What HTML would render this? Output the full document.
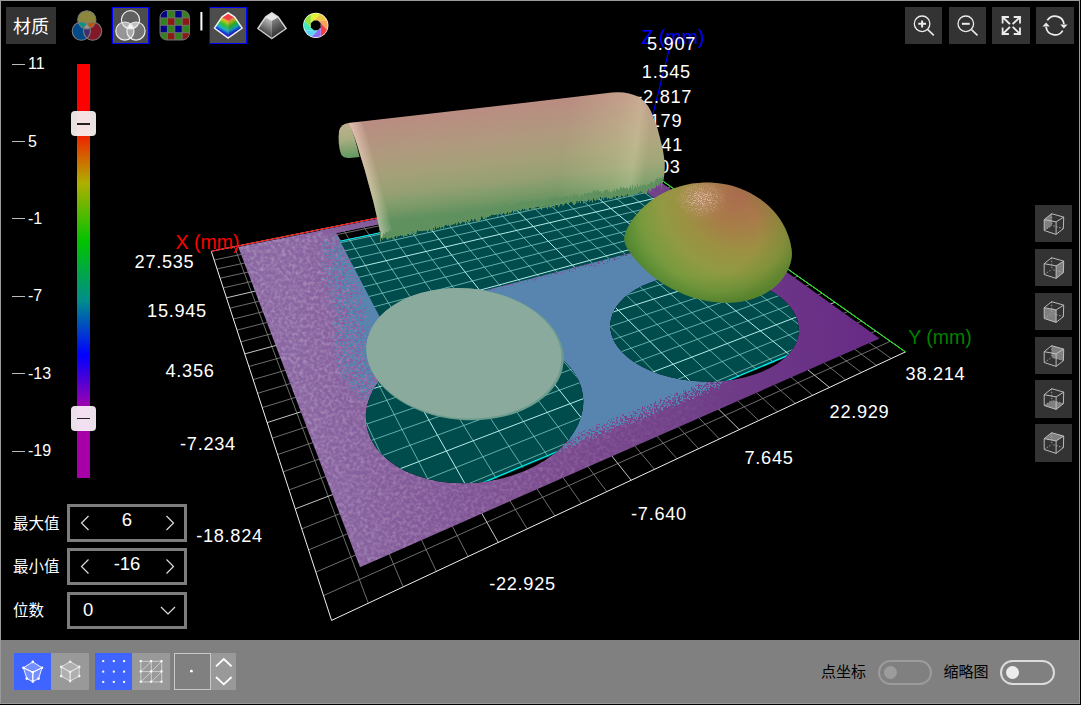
<!DOCTYPE html>
<html><head><meta charset="utf-8"><title>3D</title>
<style>
html,body{margin:0;padding:0;background:#000;}
body{width:1081px;height:705px;overflow:hidden;position:relative;font-family:"Liberation Sans","Noto Sans CJK SC",sans-serif;color:#fff;}
#frame{position:absolute;left:0;top:0;width:1078px;height:702px;border:1px solid #9a9a9a;box-sizing:content-box;}
#scene{position:absolute;left:0;top:0;width:1081px;height:705px;}
.btn{position:absolute;width:37px;height:37px;background:#333;}
.sel{position:absolute;width:35px;height:35px;background:#4d4d4d;border:1px solid #0000ff;}
#mat{position:absolute;left:6px;top:7px;width:50px;height:37px;background:#333;font-size:18px;line-height:40.6px;text-align:center;}
#bar{position:absolute;left:1px;top:640px;width:1078px;height:63px;background:#808080;}
.tick{position:absolute;left:12px;width:13px;height:1px;background:#bbb;}
.tl{position:absolute;left:28px;font-size:16px;line-height:18px;}
.lab{position:absolute;font-size:15.5px;line-height:20px;left:13px;}
.box{position:absolute;left:67px;width:114px;height:31px;border:3px solid #7d7d7d;background:#000;}
.ax{position:absolute;font-size:18.2px;letter-spacing:0.7px;line-height:20px;white-space:nowrap;transform:translate(-50%,-50%);}
.blab{position:absolute;font-size:15px;line-height:20px;color:#000;}
</style></head><body>
<svg id="scene" width="1081" height="705" viewBox="0 0 1081 705">
<defs>
<clipPath id="tealclip"><path d="M339.9,240.8 L379.9,317.2 L703.2,234.4 L629.4,179.6Z"/><path d="M524.6,471.0 L535.3,465.9 L545.1,460.2 L554.0,453.9 L561.7,447.0 L568.3,439.9 L573.7,432.4 L578.0,424.8 L580.9,417.1 L582.7,409.4 L583.4,401.8 L582.8,394.4 L581.2,387.2 L578.6,380.3 L575.0,373.8 L570.4,367.7 L565.0,362.0 L558.9,356.8 L552.0,352.2 L544.5,348.0 L536.4,344.4 L527.8,341.5 L518.8,339.1 L509.4,337.3 L499.7,336.1 L489.8,335.5 L479.8,335.6 L469.7,336.4 L459.6,337.7 L449.5,339.7 L439.7,342.3 L430.1,345.6 L420.8,349.4 L411.9,353.9 L403.5,358.9 L395.7,364.5 L388.7,370.5 L382.4,377.1 L377.0,384.0 L372.5,391.3 L369.1,398.9 L366.9,406.8 L365.9,414.7 L366.1,422.7 L367.7,430.6 L370.6,438.4 L374.8,445.9 L380.4,452.9 L387.3,459.5 L395.4,465.4 L404.6,470.7 L414.9,475.1 L426.0,478.6 L437.8,481.2 L450.2,482.7 L462.9,483.3 L475.7,482.7 L488.5,481.2 L501.0,478.7 L513.1,475.3Z"/><path d="M762.6,371.5 L770.6,367.7 L777.7,363.4 L783.8,358.7 L788.9,353.7 L793.0,348.5 L796.0,343.1 L798.0,337.5 L798.9,331.9 L798.7,326.4 L797.6,320.9 L795.5,315.5 L792.6,310.3 L788.8,305.3 L784.2,300.6 L778.9,296.2 L772.9,292.1 L766.3,288.4 L759.2,285.1 L751.7,282.2 L743.7,279.7 L735.4,277.6 L726.9,276.0 L718.2,274.8 L709.4,274.1 L700.5,273.9 L691.6,274.2 L682.8,274.9 L674.2,276.2 L665.8,277.9 L657.7,280.0 L650.0,282.7 L642.7,285.7 L636.0,289.3 L629.9,293.2 L624.5,297.5 L619.9,302.2 L616.0,307.1 L613.1,312.4 L611.2,317.9 L610.2,323.5 L610.3,329.3 L611.6,335.1 L613.9,340.9 L617.4,346.6 L622.0,352.1 L627.6,357.3 L634.3,362.2 L642.0,366.7 L650.5,370.7 L659.8,374.2 L669.7,377.1 L680.1,379.2 L690.9,380.8 L701.8,381.5 L712.8,381.6 L723.6,380.9 L734.1,379.5 L744.2,377.5 L753.7,374.8Z"/></clipPath>
<clipPath id="planeclip"><path d="M216.2,266.4 L310.7,556.2 L865.7,324.0 L653.1,174.2Z"/></clipPath>
<clipPath id="purpclip"><path d="M238.2,246.9 L639.9,167.2 L879.6,338.6 L360.0,567.2Z M336.4,233.0 L340.9,240.6 L629.4,179.6 L622.1,174.2Z" clip-rule="evenodd"/></clipPath>
<linearGradient id="cyl" gradientUnits="userSpaceOnUse" x1="500" y1="105.6" x2="512" y2="212"><stop offset="0" stop-color="#ba8c82"/><stop offset="0.33" stop-color="#af9a7e"/><stop offset="0.52" stop-color="#a5a078"/><stop offset="0.7" stop-color="#96a073"/><stop offset="0.83" stop-color="#7d9b69"/><stop offset="0.96" stop-color="#5f915f"/></linearGradient>
<radialGradient id="dome" gradientUnits="userSpaceOnUse" cx="738" cy="194" r="126"><stop offset="0" stop-color="#ac6c50"/><stop offset="0.25" stop-color="#a87c48"/><stop offset="0.45" stop-color="#9c9042"/><stop offset="0.62" stop-color="#929a42"/><stop offset="0.8" stop-color="#789a3e"/><stop offset="0.92" stop-color="#5e9036"/><stop offset="1" stop-color="#4c8430"/></radialGradient>
<radialGradient id="spec" gradientUnits="userSpaceOnUse" cx="701" cy="198" r="26"><stop offset="0" stop-color="#d8a898" stop-opacity="0.95"/><stop offset="0.35" stop-color="#d0a088" stop-opacity="0.55"/><stop offset="1" stop-color="#c09070" stop-opacity="0"/></radialGradient>
<linearGradient id="purp" gradientUnits="userSpaceOnUse" x1="300" y1="400" x2="860" y2="340"><stop offset="0" stop-color="#8a66a2"/><stop offset="0.45" stop-color="#7a4a8e"/><stop offset="0.7" stop-color="#703f88"/><stop offset="1" stop-color="#682c86"/></linearGradient>
<filter id="dither" x="0" y="0" width="1081" height="705" filterUnits="userSpaceOnUse"><feGaussianBlur in="SourceAlpha" stdDeviation="6" result="m"/><feTurbulence type="fractalNoise" baseFrequency="0.55" numOctaves="2" seed="3" result="n"/><feColorMatrix in="n" type="matrix" values="0 0 0 0 0  0 0 0 0 0  0 0 0 0 0  3 0 0 0 -1" result="na"/><feComposite in="m" in2="m" operator="arithmetic" k1="-4" k2="4" k3="0" k4="0" result="q"/><feComposite in="q" in2="na" operator="arithmetic" k1="0.5333" k2="0" k3="0" k4="0" result="u"/><feComposite in="m" in2="u" operator="arithmetic" k1="0" k2="0.3333" k3="1" k4="0" result="v"/><feComposite in="v" in2="q" operator="arithmetic" k1="0" k2="1" k3="-0.2667" k4="0" result="s"/><feComponentTransfer in="s" result="t"><feFuncA type="linear" slope="18" intercept="-2.5"/></feComponentTransfer><feFlood flood-color="#5884b0"/><feComposite in2="t" operator="in"/></filter>
<filter id="ditherL" x="0" y="0" width="1081" height="705" filterUnits="userSpaceOnUse"><feGaussianBlur in="SourceAlpha" stdDeviation="17" result="m"/><feTurbulence type="fractalNoise" baseFrequency="0.55" numOctaves="2" seed="11" result="n"/><feColorMatrix in="n" type="matrix" values="0 0 0 0 0  0 0 0 0 0  0 0 0 0 0  3 0 0 0 -1" result="na"/><feComposite in="m" in2="m" operator="arithmetic" k1="-4" k2="4" k3="0" k4="0" result="q"/><feComposite in="q" in2="na" operator="arithmetic" k1="0.5333" k2="0" k3="0" k4="0" result="u"/><feComposite in="m" in2="u" operator="arithmetic" k1="0" k2="0.3333" k3="1" k4="0" result="v"/><feComposite in="v" in2="q" operator="arithmetic" k1="0" k2="1" k3="-0.2667" k4="0" result="s"/><feComponentTransfer in="s" result="t"><feFuncA type="linear" slope="18" intercept="-2.5"/></feComponentTransfer><feFlood flood-color="#5884b0"/><feComposite in2="t" operator="in"/></filter>
<filter id="speck" x="0" y="0" width="1081" height="705" filterUnits="userSpaceOnUse"><feTurbulence type="fractalNoise" baseFrequency="0.28" numOctaves="2" seed="7" result="n"/><feColorMatrix in="n" type="matrix" values="0 0 0 0 1  0 0 0 0 1  0 0 0 0 1  2.2 0 0 0 -0.85" result="na"/><feComposite in="na" in2="SourceAlpha" operator="in"/></filter>
<linearGradient id="speckfade" gradientUnits="userSpaceOnUse" x1="300" y1="400" x2="760" y2="350"><stop offset="0" stop-color="#fff" stop-opacity="1"/><stop offset="0.6" stop-color="#fff" stop-opacity="0.5"/><stop offset="1" stop-color="#fff" stop-opacity="0"/></linearGradient>
<mask id="speckmask"><path d="M238.2,246.9 L639.9,167.2 L879.6,338.6 L360.0,567.2Z M336.4,233.0 L340.9,240.6 L629.4,179.6 L622.1,174.2Z" fill="url(#speckfade)" fill-rule="evenodd"/></mask>
<filter id="rag" x="360" y="160" width="320" height="100" filterUnits="userSpaceOnUse"><feTurbulence type="fractalNoise" baseFrequency="0.6 0.08" numOctaves="2" seed="5" result="n"/><feDisplacementMap in="SourceGraphic" in2="n" scale="9" xChannelSelector="G" yChannelSelector="R"/></filter>
<linearGradient id="capg" gradientUnits="userSpaceOnUse" x1="345" y1="123" x2="349" y2="159"><stop offset="0" stop-color="#c0b08c"/><stop offset="0.45" stop-color="#a8ae80"/><stop offset="1" stop-color="#5f965f"/></linearGradient>
<linearGradient id="cylend" gradientUnits="userSpaceOnUse" x1="585" y1="0" x2="668" y2="12"><stop offset="0" stop-color="#f0e8b0" stop-opacity="0"/><stop offset="0.6" stop-color="#f0e8b0" stop-opacity="0.18"/><stop offset="0.85" stop-color="#f4ecc0" stop-opacity="0.3"/><stop offset="1" stop-color="#f0e8b0" stop-opacity="0.1"/></linearGradient>
<linearGradient id="cyledge" gradientUnits="userSpaceOnUse" x1="366" y1="180" x2="379" y2="176.5"><stop offset="0" stop-color="#ffe8d8" stop-opacity="0.5"/><stop offset="1" stop-color="#ffe8d8" stop-opacity="0"/></linearGradient>
<radialGradient id="spec2" gradientUnits="userSpaceOnUse" cx="701" cy="199" r="27"><stop offset="0" stop-color="#e8c8c0" stop-opacity="1"/><stop offset="0.3" stop-color="#e0c0b0" stop-opacity="0.8"/><stop offset="1" stop-color="#d8b8a0" stop-opacity="0"/></radialGradient>
<filter id="specn" x="660" y="160" width="90" height="80" filterUnits="userSpaceOnUse"><feTurbulence type="fractalNoise" baseFrequency="0.8" numOctaves="1" seed="2" result="n"/><feColorMatrix in="n" type="matrix" values="0 0 0 0 0  0 0 0 0 0  0 0 0 0 0  5 0 0 0 -2.4" result="na"/><feComposite in="SourceGraphic" in2="na" operator="in"/></filter>
<clipPath id="domeclip"><path d="M625.0,243.7 L624.1,238.4 L625.2,233.2 L627.4,228.1 L630.1,223.3 L633.2,218.6 L636.7,214.2 L640.5,209.9 L644.6,205.9 L649.0,202.2 L653.7,198.7 L658.6,195.6 L663.8,192.7 L669.2,190.2 L674.7,188.0 L680.4,186.2 L686.3,184.7 L692.2,183.6 L698.2,182.9 L704.2,182.5 L710.2,182.5 L716.3,182.9 L722.2,183.7 L728.1,184.8 L733.9,186.3 L739.5,188.2 L745.0,190.4 L750.3,193.0 L755.3,195.9 L760.1,199.1 L764.7,202.5 L769.0,206.3 L772.9,210.3 L776.6,214.6 L779.9,219.1 L782.8,223.8 L785.3,228.6 L787.5,233.7 L789.3,238.8 L790.6,244.0 L791.6,249.4 L791.9,254.7 L791.3,260.0 L790.0,264.8 L788.1,269.3 L785.9,273.6 L783.2,277.6 L780.2,281.4 L776.8,284.9 L773.0,288.2 L768.9,291.1 L764.5,293.8 L759.8,296.1 L754.9,298.1 L749.6,299.7 L744.2,301.0 L738.6,302.0 L732.7,302.6 L726.8,302.8 L720.7,302.6 L714.6,302.1 L708.4,301.2 L702.2,300.0 L696.0,298.4 L689.8,296.5 L683.7,294.2 L677.7,291.6 L671.9,288.7 L666.1,285.5 L660.6,282.0 L655.3,278.3 L650.2,274.3 L645.4,270.0 L640.9,265.6 L636.6,261.0 L632.7,256.2 L629.2,251.3 L626.1,246.3Z"/></clipPath>
<radialGradient id="domerim" gradientUnits="userSpaceOnUse" cx="700" cy="232" r="100" gradientTransform="translate(700,232) scale(1,0.74) translate(-700,-232)"><stop offset="0" stop-color="#3c6e1e" stop-opacity="0"/><stop offset="0.6" stop-color="#3c6e1e" stop-opacity="0"/><stop offset="0.85" stop-color="#3c6e1e" stop-opacity="0.22"/><stop offset="1" stop-color="#3c6e1e" stop-opacity="0.5"/></radialGradient>
</defs>
<rect width="1081" height="705" fill="#000"/>
<path d="M214.1,260.0 L647.7,170.4 M234.4,246.7 L368.3,603.2 M217.1,268.9 L655.3,175.7 M256.9,242.1 L403.2,586.9 M220.1,278.2 L663.1,181.2 M278.8,237.7 L436.4,571.4 M223.2,287.9 L671.1,186.9 M300.0,233.5 L468.1,556.5 M229.8,308.2 L687.8,198.6 M340.7,225.3 L527.2,528.8 M233.4,319.0 L696.4,204.7 M360.3,221.4 L554.9,515.9 M237.0,330.1 L705.3,211.0 M379.3,217.5 L581.4,503.5 M240.8,341.8 L714.5,217.4 M397.9,213.8 L606.8,491.6 M248.8,366.5 L733.6,230.9 M433.6,206.7 L654.5,469.3 M253.1,379.6 L743.5,237.9 M450.7,203.2 L677.0,458.8 M257.6,393.3 L753.8,245.1 M467.5,199.8 L698.6,448.7 M262.3,407.6 L764.3,252.5 M483.8,196.6 L719.4,438.9 M272.2,438.2 L786.4,268.1 M515.3,190.2 L758.7,420.5 M277.6,454.6 L798.0,276.2 M530.5,187.2 L777.4,411.8 M283.2,471.8 L809.9,284.6 M545.3,184.2 L795.3,403.4 M289.1,489.9 L822.2,293.3 M559.8,181.3 L812.7,395.3 M301.8,528.8 L848.1,311.5 M587.8,175.7 L845.6,379.9 M308.6,549.9 L861.7,321.1 M601.4,172.9 L861.3,372.5 M315.9,572.1 L875.8,331.0 M614.6,170.3 L876.5,365.4 M323.5,595.6 L890.3,341.3 M627.6,167.7 L891.2,358.6" stroke="#888888" stroke-width="0.8" fill="none"/>
<path d="M226.5,297.8 L679.3,192.6 M320.6,229.3 L498.3,542.4 M244.7,353.9 L723.9,224.0 M415.9,210.2 L631.1,480.2 M267.1,422.6 L775.2,260.2 M499.7,193.4 L739.4,429.6 M295.2,508.9 L835.0,302.3 M574.0,178.4 L829.4,387.4" stroke="#c4c4c4" stroke-width="1" fill="none"/>
<path d="M238.2,246.9 L639.9,167.2 L879.6,338.6 L360.0,567.2Z M336.4,233.0 L340.9,240.6 L629.4,179.6 L622.1,174.2Z" fill="url(#purp)" fill-rule="evenodd"/>
<g mask="url(#speckmask)"><path d="M238.2,246.9 L639.9,167.2 L879.6,338.6 L360.0,567.2Z M336.4,233.0 L340.9,240.6 L629.4,179.6 L622.1,174.2Z" filter="url(#speck)" opacity="0.26"/></g>
<g clip-path="url(#purpclip)"><path d="M330.0,237.8 L341.1,241.7 L389.2,231.5 L481.1,361.6 L380.6,394.3 L352.7,375.2 L351.5,316.9 L342.0,280.3Z" filter="url(#ditherL)"/><path d="M391.6,308.1 L679.0,240.1 L730.7,280.4 L722.0,380.7 L554.9,448.0 L486.1,435.8 L408.0,334.8Z" filter="url(#dither)"/></g>
<path d="M321.1,230.2 L398.6,214.7 L402.1,219.5 L324.1,235.5Z" fill="url(#purp)"/>
<path d="M524.6,471.0 L535.3,465.9 L545.1,460.2 L554.0,453.9 L561.7,447.0 L568.3,439.9 L573.7,432.4 L578.0,424.8 L580.9,417.1 L582.7,409.4 L583.4,401.8 L582.8,394.4 L581.2,387.2 L578.6,380.3 L575.0,373.8 L570.4,367.7 L565.0,362.0 L558.9,356.8 L552.0,352.2 L544.5,348.0 L536.4,344.4 L527.8,341.5 L518.8,339.1 L509.4,337.3 L499.7,336.1 L489.8,335.5 L479.8,335.6 L469.7,336.4 L459.6,337.7 L449.5,339.7 L439.7,342.3 L430.1,345.6 L420.8,349.4 L411.9,353.9 L403.5,358.9 L395.7,364.5 L388.7,370.5 L382.4,377.1 L377.0,384.0 L372.5,391.3 L369.1,398.9 L366.9,406.8 L365.9,414.7 L366.1,422.7 L367.7,430.6 L370.6,438.4 L374.8,445.9 L380.4,452.9 L387.3,459.5 L395.4,465.4 L404.6,470.7 L414.9,475.1 L426.0,478.6 L437.8,481.2 L450.2,482.7 L462.9,483.3 L475.7,482.7 L488.5,481.2 L501.0,478.7 L513.1,475.3Z M762.6,371.5 L770.6,367.7 L777.7,363.4 L783.8,358.7 L788.9,353.7 L793.0,348.5 L796.0,343.1 L798.0,337.5 L798.9,331.9 L798.7,326.4 L797.6,320.9 L795.5,315.5 L792.6,310.3 L788.8,305.3 L784.2,300.6 L778.9,296.2 L772.9,292.1 L766.3,288.4 L759.2,285.1 L751.7,282.2 L743.7,279.7 L735.4,277.6 L726.9,276.0 L718.2,274.8 L709.4,274.1 L700.5,273.9 L691.6,274.2 L682.8,274.9 L674.2,276.2 L665.8,277.9 L657.7,280.0 L650.0,282.7 L642.7,285.7 L636.0,289.3 L629.9,293.2 L624.5,297.5 L619.9,302.2 L616.0,307.1 L613.1,312.4 L611.2,317.9 L610.2,323.5 L610.3,329.3 L611.6,335.1 L613.9,340.9 L617.4,346.6 L622.0,352.1 L627.6,357.3 L634.3,362.2 L642.0,366.7 L650.5,370.7 L659.8,374.2 L669.7,377.1 L680.1,379.2 L690.9,380.8 L701.8,381.5 L712.8,381.6 L723.6,380.9 L734.1,379.5 L744.2,377.5 L753.7,374.8Z" fill="#000"/>
<g clip-path="url(#planeclip)"><g clip-path="url(#tealclip)"><rect width="1081" height="705" fill="#004c4c"/>
<path d="M214.1,260.0 L647.7,170.4 M234.4,246.7 L368.3,603.2 M217.1,268.9 L655.3,175.7 M256.9,242.1 L403.2,586.9 M220.1,278.2 L663.1,181.2 M278.8,237.7 L436.4,571.4 M223.2,287.9 L671.1,186.9 M300.0,233.5 L468.1,556.5 M229.8,308.2 L687.8,198.6 M340.7,225.3 L527.2,528.8 M233.4,319.0 L696.4,204.7 M360.3,221.4 L554.9,515.9 M237.0,330.1 L705.3,211.0 M379.3,217.5 L581.4,503.5 M240.8,341.8 L714.5,217.4 M397.9,213.8 L606.8,491.6 M248.8,366.5 L733.6,230.9 M433.6,206.7 L654.5,469.3 M253.1,379.6 L743.5,237.9 M450.7,203.2 L677.0,458.8 M257.6,393.3 L753.8,245.1 M467.5,199.8 L698.6,448.7 M262.3,407.6 L764.3,252.5 M483.8,196.6 L719.4,438.9 M272.2,438.2 L786.4,268.1 M515.3,190.2 L758.7,420.5 M277.6,454.6 L798.0,276.2 M530.5,187.2 L777.4,411.8 M283.2,471.8 L809.9,284.6 M545.3,184.2 L795.3,403.4 M289.1,489.9 L822.2,293.3 M559.8,181.3 L812.7,395.3 M301.8,528.8 L848.1,311.5 M587.8,175.7 L845.6,379.9 M308.6,549.9 L861.7,321.1 M601.4,172.9 L861.3,372.5 M315.9,572.1 L875.8,331.0 M614.6,170.3 L876.5,365.4 M323.5,595.6 L890.3,341.3 M627.6,167.7 L891.2,358.6" stroke="#86ccc8" stroke-width="0.75" fill="none"/>
<path d="M226.5,297.8 L679.3,192.6 M320.6,229.3 L498.3,542.4 M244.7,353.9 L723.9,224.0 M415.9,210.2 L631.1,480.2 M267.1,422.6 L775.2,260.2 M499.7,193.4 L739.4,429.6 M295.2,508.9 L835.0,302.3 M574.0,178.4 L829.4,387.4" stroke="#b4ecea" stroke-width="1" fill="none"/>
<path d="M310.2,554.7 L864.8,323.3 M340.0,241.0 L629.5,179.8" stroke="#00f0f0" stroke-width="1.3" fill="none"/></g></g>
<path d="M211.3,251.3 L331.6,620.4 L905.4,351.9 L640.2,165.1Z" stroke="#f0f0f0" stroke-width="1" fill="none"/>
<path d="M211.3,251.3 L640.2,165.1" stroke="#ff0000" stroke-width="1"/>
<path d="M905.4,351.9 L640.2,165.1" stroke="#00e800" stroke-width="1"/>
<path d="M640.2,165.1 L670.5,44" stroke="#0000ff" stroke-width="1.1"/>
<g font-family="'Liberation Sans',sans-serif" font-size="18.2" text-anchor="middle">
<text x="673" y="43.5" fill="#0000ff" font-size="19.5">Z (mm)</text>
<text x="671.55" y="50.3" fill="#fff" letter-spacing="0.7">5.907</text>
<text x="666.35" y="77.7" fill="#fff" letter-spacing="0.7">1.545</text>
<text x="664.25" y="103.1" fill="#fff" letter-spacing="0.7">-2.817</text>
<text x="654.35" y="127.4" fill="#fff" letter-spacing="0.7">-7.179</text>
<text x="650.35" y="151.2" fill="#fff" letter-spacing="0.7">-11.541</text>
<text x="647.35" y="172.6" fill="#fff" letter-spacing="0.7">-15.903</text>
</g>
<ellipse cx="465.05" cy="354.17" rx="98.96" ry="65.77" transform="rotate(4.7 465.05 354.17)" fill="#6c9c8c"/>
<ellipse cx="463.9" cy="353.3" rx="97.8" ry="64.9" transform="rotate(4.7 463.9 353.3)" fill="#8aaa9e"/>
<path d="M349,123 Q341,123.5 339,131 Q337.5,144 341,154 Q343,158.5 350,158 L359.5,157 Q355,136 349,123Z" fill="url(#capg)"/>
<path d="M348.4,123 L540,101 L612,92.6 Q626,90.8 639,96.9 Q649,104 653.3,116.7 Q658,128 660.4,139.4 Q663.5,150 664.7,162 Q665.2,172 663.3,181 L644.8,190.5 L520,208 L381,238 Q379,226 376.7,216 Q373.5,201 369.6,187.7 Q365,170 359.7,153.6 Q355,136 348.4,123Z" fill="url(#cyl)"/>
<path d="M348.4,123 L540,101 L612,92.6 Q626,90.8 639,96.9 Q649,104 653.3,116.7 Q658,128 660.4,139.4 Q663.5,150 664.7,162 Q665.2,172 663.3,181 L644.8,190.5 L520,208 L381,238 Q379,226 376.7,216 Q373.5,201 369.6,187.7 Q365,170 359.7,153.6 Q355,136 348.4,123Z" fill="url(#cylend)"/>
<path d="M348.4,123 Q355,136 359.7,153.6 Q365,170 369.6,187.7 Q373.5,201 376.7,216 Q379,226 381,238 L393,235.5 Q389,214 383,190 Q375,158 362,121.5Z" fill="url(#cyledge)"/>
<path d="M381,233 L520,203 L644.8,185.5 L663,177 L663,184 L644.8,193 L520,210.5 L381.5,240Z" fill="#5f915f" filter="url(#rag)"/>
<path d="M625.0,243.7 L624.1,238.4 L625.2,233.2 L627.4,228.1 L630.1,223.3 L633.2,218.6 L636.7,214.2 L640.5,209.9 L644.6,205.9 L649.0,202.2 L653.7,198.7 L658.6,195.6 L663.8,192.7 L669.2,190.2 L674.7,188.0 L680.4,186.2 L686.3,184.7 L692.2,183.6 L698.2,182.9 L704.2,182.5 L710.2,182.5 L716.3,182.9 L722.2,183.7 L728.1,184.8 L733.9,186.3 L739.5,188.2 L745.0,190.4 L750.3,193.0 L755.3,195.9 L760.1,199.1 L764.7,202.5 L769.0,206.3 L772.9,210.3 L776.6,214.6 L779.9,219.1 L782.8,223.8 L785.3,228.6 L787.5,233.7 L789.3,238.8 L790.6,244.0 L791.6,249.4 L791.9,254.7 L791.3,260.0 L790.0,264.8 L788.1,269.3 L785.9,273.6 L783.2,277.6 L780.2,281.4 L776.8,284.9 L773.0,288.2 L768.9,291.1 L764.5,293.8 L759.8,296.1 L754.9,298.1 L749.6,299.7 L744.2,301.0 L738.6,302.0 L732.7,302.6 L726.8,302.8 L720.7,302.6 L714.6,302.1 L708.4,301.2 L702.2,300.0 L696.0,298.4 L689.8,296.5 L683.7,294.2 L677.7,291.6 L671.9,288.7 L666.1,285.5 L660.6,282.0 L655.3,278.3 L650.2,274.3 L645.4,270.0 L640.9,265.6 L636.6,261.0 L632.7,256.2 L629.2,251.3 L626.1,246.3Z" fill="url(#dome)"/>
<path d="M625.0,243.7 L624.1,238.4 L625.2,233.2 L627.4,228.1 L630.1,223.3 L633.2,218.6 L636.7,214.2 L640.5,209.9 L644.6,205.9 L649.0,202.2 L653.7,198.7 L658.6,195.6 L663.8,192.7 L669.2,190.2 L674.7,188.0 L680.4,186.2 L686.3,184.7 L692.2,183.6 L698.2,182.9 L704.2,182.5 L710.2,182.5 L716.3,182.9 L722.2,183.7 L728.1,184.8 L733.9,186.3 L739.5,188.2 L745.0,190.4 L750.3,193.0 L755.3,195.9 L760.1,199.1 L764.7,202.5 L769.0,206.3 L772.9,210.3 L776.6,214.6 L779.9,219.1 L782.8,223.8 L785.3,228.6 L787.5,233.7 L789.3,238.8 L790.6,244.0 L791.6,249.4 L791.9,254.7 L791.3,260.0 L790.0,264.8 L788.1,269.3 L785.9,273.6 L783.2,277.6 L780.2,281.4 L776.8,284.9 L773.0,288.2 L768.9,291.1 L764.5,293.8 L759.8,296.1 L754.9,298.1 L749.6,299.7 L744.2,301.0 L738.6,302.0 L732.7,302.6 L726.8,302.8 L720.7,302.6 L714.6,302.1 L708.4,301.2 L702.2,300.0 L696.0,298.4 L689.8,296.5 L683.7,294.2 L677.7,291.6 L671.9,288.7 L666.1,285.5 L660.6,282.0 L655.3,278.3 L650.2,274.3 L645.4,270.0 L640.9,265.6 L636.6,261.0 L632.7,256.2 L629.2,251.3 L626.1,246.3Z" fill="url(#domerim)"/>
<path d="M625.0,243.7 L624.1,238.4 L625.2,233.2 L627.4,228.1 L630.1,223.3 L633.2,218.6 L636.7,214.2 L640.5,209.9 L644.6,205.9 L649.0,202.2 L653.7,198.7 L658.6,195.6 L663.8,192.7 L669.2,190.2 L674.7,188.0 L680.4,186.2 L686.3,184.7 L692.2,183.6 L698.2,182.9 L704.2,182.5 L710.2,182.5 L716.3,182.9 L722.2,183.7 L728.1,184.8 L733.9,186.3 L739.5,188.2 L745.0,190.4 L750.3,193.0 L755.3,195.9 L760.1,199.1 L764.7,202.5 L769.0,206.3 L772.9,210.3 L776.6,214.6 L779.9,219.1 L782.8,223.8 L785.3,228.6 L787.5,233.7 L789.3,238.8 L790.6,244.0 L791.6,249.4 L791.9,254.7 L791.3,260.0 L790.0,264.8 L788.1,269.3 L785.9,273.6 L783.2,277.6 L780.2,281.4 L776.8,284.9 L773.0,288.2 L768.9,291.1 L764.5,293.8 L759.8,296.1 L754.9,298.1 L749.6,299.7 L744.2,301.0 L738.6,302.0 L732.7,302.6 L726.8,302.8 L720.7,302.6 L714.6,302.1 L708.4,301.2 L702.2,300.0 L696.0,298.4 L689.8,296.5 L683.7,294.2 L677.7,291.6 L671.9,288.7 L666.1,285.5 L660.6,282.0 L655.3,278.3 L650.2,274.3 L645.4,270.0 L640.9,265.6 L636.6,261.0 L632.7,256.2 L629.2,251.3 L626.1,246.3Z" fill="url(#spec)" opacity="0.45"/>
<g clip-path="url(#domeclip)"><g transform="translate(701,199) scale(1,0.7) translate(-701,-199)"><circle cx="701" cy="199" r="27" fill="url(#spec2)" filter="url(#specn)"/></g></g>
</svg>
<div id="frame"></div>
<!-- top-left toolbar -->
<div id="mat">材质</div>
<div class="sel" style="left:112px;top:7px;"></div>
<div class="sel" style="left:209px;top:7px;width:36px"></div>
<svg style="position:absolute;left:60px;top:0" width="290" height="50" viewBox="60 0 290 50">
<defs>
<clipPath id="cT"><circle cx="86.8" cy="19.8" r="9.1"/></clipPath>
<clipPath id="cL"><circle cx="81.3" cy="31.1" r="9.1"/></clipPath>
<clipPath id="cT2"><circle cx="130.5" cy="19.8" r="9.1"/></clipPath>
<clipPath id="cL2"><circle cx="124.9" cy="31.1" r="9.1"/></clipPath>
<clipPath id="bay"><rect x="160" y="10.5" width="29.5" height="29.5" rx="7"/></clipPath>
<linearGradient id="pyL" gradientUnits="userSpaceOnUse" x1="226" y1="17" x2="217" y2="33">
<stop offset="0" stop-color="#f03c3c"/><stop offset="0.2" stop-color="#d8c020"/><stop offset="0.42" stop-color="#30c030"/><stop offset="0.62" stop-color="#20b0c0"/><stop offset="0.8" stop-color="#1030e0"/><stop offset="1" stop-color="#a010c0"/></linearGradient>
<linearGradient id="pyR" gradientUnits="userSpaceOnUse" x1="230.5" y1="17" x2="239.5" y2="33">
<stop offset="0" stop-color="#e03030"/><stop offset="0.2" stop-color="#c0a818"/><stop offset="0.42" stop-color="#28a828"/><stop offset="0.62" stop-color="#1898a8"/><stop offset="0.8" stop-color="#0c28c8"/><stop offset="1" stop-color="#900ca8"/></linearGradient>
<linearGradient id="gyL" gradientUnits="userSpaceOnUse" x1="270" y1="17" x2="261" y2="33">
<stop offset="0" stop-color="#d0d0d0"/><stop offset="1" stop-color="#3a3a3a"/></linearGradient>
<linearGradient id="gyR" gradientUnits="userSpaceOnUse" x1="274" y1="17" x2="283" y2="33">
<stop offset="0" stop-color="#8c8c8c"/><stop offset="1" stop-color="#2a2a2a"/></linearGradient>
</defs>
<!-- rgb circles -->
<circle cx="86.8" cy="19.8" r="9.1" fill="#8c873c"/>
<circle cx="81.3" cy="31.1" r="9.1" fill="#004b87"/>
<circle cx="92.6" cy="31.1" r="9.1" fill="#821928"/>
<circle cx="81.3" cy="31.1" r="9.1" fill="#009682" clip-path="url(#cT)"/>
<circle cx="92.6" cy="31.1" r="9.1" fill="#b95a00" clip-path="url(#cT)"/>
<circle cx="92.6" cy="31.1" r="9.1" fill="#412d6e" clip-path="url(#cL)"/>
<g clip-path="url(#cT)"><circle cx="92.6" cy="31.1" r="9.1" fill="#9a9a9a" clip-path="url(#cL)"/></g>
<g fill="none" stroke="#7c7c7c" stroke-width="1.1"><circle cx="86.8" cy="19.8" r="9.1"/><circle cx="81.3" cy="31.1" r="9.1"/><circle cx="92.6" cy="31.1" r="9.1"/></g>
<!-- gray circles -->
<circle cx="130.5" cy="19.8" r="9.1" fill="#606060"/>
<circle cx="124.9" cy="31.1" r="9.1" fill="#969696"/>
<circle cx="136" cy="31.1" r="9.1" fill="#757575"/>
<circle cx="124.9" cy="31.1" r="9.1" fill="#b4b4b4" clip-path="url(#cT2)"/>
<circle cx="136" cy="31.1" r="9.1" fill="#c0c0c0" clip-path="url(#cT2)"/>
<circle cx="136" cy="31.1" r="9.1" fill="#a8a8a8" clip-path="url(#cL2)"/>
<g clip-path="url(#cT2)"><circle cx="136" cy="31.1" r="9.1" fill="#f4f4f4" clip-path="url(#cL2)"/></g>
<g fill="none" stroke="#ececec" stroke-width="1.2"><circle cx="130.5" cy="19.8" r="9.1"/><circle cx="124.9" cy="31.1" r="9.1"/><circle cx="136" cy="31.1" r="9.1"/></g>
<!-- bayer -->
<g clip-path="url(#bay)">
<rect x="160" y="10.5" width="30" height="30" fill="#6e6e6e"/>
<g fill="#34821e"><rect x="167.9" y="11" width="6.4" height="6.4"/><rect x="182.7" y="11" width="6.4" height="6.4"/><rect x="160.5" y="18.4" width="6.4" height="6.4"/><rect x="175.3" y="18.4" width="6.4" height="6.4"/><rect x="167.9" y="25.8" width="6.4" height="6.4"/><rect x="182.7" y="25.8" width="6.4" height="6.4"/><rect x="160.5" y="33.2" width="6.4" height="6.4"/><rect x="175.3" y="33.2" width="6.4" height="6.4"/></g>
<g fill="#00008c"><rect x="160.5" y="11" width="6.4" height="6.4"/><rect x="175.3" y="11" width="6.4" height="6.4"/><rect x="160.5" y="25.8" width="6.4" height="6.4"/><rect x="175.3" y="25.8" width="6.4" height="6.4"/></g>
<g fill="#8c1914"><rect x="167.9" y="18.4" width="6.4" height="6.4"/><rect x="182.7" y="18.4" width="6.4" height="6.4"/><rect x="167.9" y="33.2" width="6.4" height="6.4"/><rect x="182.7" y="33.2" width="6.4" height="6.4"/></g>
</g>
<rect x="160" y="10.5" width="29.5" height="29.5" rx="7" fill="none" stroke="#707070" stroke-width="1"/>
<!-- separator -->
<rect x="200.4" y="12" width="2" height="18.5" fill="#fff"/>
<!-- color pyramid -->
<path d="M228.1,12.3 L234.75,16.5 L242.7,28.2 L228.1,38.6 L213.9,28.2 L221.8,16.5Z" fill="#fff" stroke="#fff" stroke-width="0.6" stroke-linejoin="round"/>
<path d="M222.44,17.47 L228.11,20.84 L228.11,37.36 L215.33,28.00Z" fill="url(#pyL)"/>
<path d="M234.09,17.47 L228.11,20.84 L228.11,37.36 L241.25,28.00Z" fill="url(#pyR)"/>
<path d="M228.11,13.69 L234.09,17.47 L228.11,20.84 L222.44,17.47Z" fill="#f04040"/>
<!-- gray pyramid -->
<path d="M271.8,12.3 L278.3,16.5 L286.7,28.6 L271.8,39 L257.3,28.6 L265.4,16.5Z" fill="#e0e0e0" stroke="#e0e0e0" stroke-width="0.6" stroke-linejoin="round"/>
<path d="M266.05,17.49 L271.81,20.86 L271.81,37.74 L258.76,28.38Z" fill="url(#gyL)"/>
<path d="M277.66,17.49 L271.81,20.86 L271.81,37.74 L285.22,28.38Z" fill="url(#gyR)"/>
<path d="M271.81,13.71 L277.66,17.49 L271.81,20.86 L266.05,17.49Z" fill="#e6e6e6"/>
<!-- aperture -->
<g transform="translate(315.8,25.3)">
<circle r="12.6" fill="#fff"/>
<path d="M-4.90,-2.03 L-4.90,-10.84 A11.9,11.9 0 0 1 4.20,-11.13 Z" fill="#e1f032"/><path d="M-2.03,-4.90 L4.20,-11.13 A11.9,11.9 0 0 1 10.84,-4.90 Z" fill="#ebc83c"/><path d="M2.03,-4.90 L10.84,-4.90 A11.9,11.9 0 0 1 11.13,4.20 Z" fill="#faa05a"/><path d="M4.90,-2.03 L11.13,4.20 A11.9,11.9 0 0 1 4.90,10.84 Z" fill="#f53c46"/><path d="M4.90,2.03 L4.90,10.84 A11.9,11.9 0 0 1 -4.20,11.13 Z" fill="#8c6ef0"/><path d="M2.03,4.90 L-4.20,11.13 A11.9,11.9 0 0 1 -10.84,4.90 Z" fill="#5ad2fa"/><path d="M-2.03,4.90 L-10.84,4.90 A11.9,11.9 0 0 1 -11.13,-4.20 Z" fill="#46e6be"/><path d="M-4.90,2.03 L-11.13,-4.20 A11.9,11.9 0 0 1 -4.90,-10.84 Z" fill="#96e13c"/>
<polygon points="-4.90,2.03 -4.90,-2.03 -2.03,-4.90 2.03,-4.90 4.90,-2.03 4.90,2.03 2.03,4.90 -2.03,4.90" fill="#000"/>
</g>
</svg>
<!-- top-right -->
<div class="btn" style="left:905px;top:7px;"></div>
<div class="btn" style="left:949px;top:7px;"></div>
<div class="btn" style="left:992px;top:7px;width:38px"></div>
<div class="btn" style="left:1036px;top:7px;width:38px"></div>
<svg style="position:absolute;left:900px;top:0" width="181" height="50" viewBox="900 0 181 50" fill="none" stroke="#ececec" stroke-linecap="butt">
<circle cx="922.1" cy="23.8" r="7.8" stroke-width="1.3"/><path d="M927.8,29.6 L933.8,35.4" stroke-width="1.5"/>
<path d="M918.2,23.8 H926 M922.1,20.4 V27.4" stroke-width="2"/>
<circle cx="965.8" cy="23.8" r="7.8" stroke-width="1.3"/><path d="M971.5,29.6 L977.5,35.4" stroke-width="1.5"/>
<path d="M961.9,23.8 H969.7" stroke-width="2"/>
<g stroke-width="1.8" stroke-linecap="square">
<path d="M1009.3,23.5 L1002.6,17 M1002.6,22.5 V17 H1008"/>
<path d="M1013.3,23.5 L1020,17 M1020,22.5 V17 H1014.6"/>
<path d="M1009.3,27.5 L1002.6,34 M1002.6,28.5 V34 H1008"/>
<path d="M1013.3,27.5 L1020,34 M1020,28.5 V34 H1014.6"/>
</g>
<path d="M1047.3,20.4 A9,9 0 0 1 1063.9,24" stroke-width="1.8"/>
<path d="M1062.7,30.6 A9,9 0 0 1 1046.1,27" stroke-width="1.8"/>
<path d="M1060.3,24.4 H1067.5 L1063.9,28.4Z" fill="#ececec" stroke="none"/>
<path d="M1042.5,26.6 H1049.7 L1046.1,22.6Z" fill="#ececec" stroke="none"/>
</svg>
<!-- right cubes -->
<div class="btn" style="left:1035px;top:205px;"><svg width="37" height="37" viewBox="0 0 37 37" fill="none" stroke="#c8c8c8" stroke-width="0.9" stroke-linejoin="round"><path d="M9.2,14.7 L16.6,8.7 L16.9,20.4 L9.2,25.5Z" fill="rgba(220,220,220,0.45)" stroke="none"/><path d="M9.2,14.7 L16.6,8.7 L28.7,12.1 L21.1,16.9Z M9.2,14.7 L9.2,25.5 L21.1,29.4 L28.4,23.6 M21.1,16.9 L21.1,29.4 M28.7,12.1 L28.4,23.6"/><path d="M16.6,8.7 L16.9,20.4 M9.2,25.5 L16.9,20.4 M28.4,23.6 L16.9,20.4" stroke-dasharray="1.5,1.5" stroke="#aaa"/></svg></div>
<div class="btn" style="left:1035px;top:249px;"><svg width="37" height="37" viewBox="0 0 37 37" fill="none" stroke="#c8c8c8" stroke-width="0.9" stroke-linejoin="round"><path d="M21.1,16.9 L28.7,12.1 L28.4,23.6 L21.1,29.4Z" fill="rgba(220,220,220,0.45)" stroke="none"/><path d="M9.2,14.7 L16.6,8.7 L28.7,12.1 L21.1,16.9Z M9.2,14.7 L9.2,25.5 L21.1,29.4 L28.4,23.6 M21.1,16.9 L21.1,29.4 M28.7,12.1 L28.4,23.6"/><path d="M16.6,8.7 L16.9,20.4 M9.2,25.5 L16.9,20.4 M28.4,23.6 L16.9,20.4" stroke-dasharray="1.5,1.5" stroke="#aaa"/></svg></div>
<div class="btn" style="left:1035px;top:293px;"><svg width="37" height="37" viewBox="0 0 37 37" fill="none" stroke="#c8c8c8" stroke-width="0.9" stroke-linejoin="round"><path d="M9.2,14.7 L21.1,16.9 L21.1,29.4 L9.2,25.5Z" fill="rgba(220,220,220,0.45)" stroke="none"/><path d="M9.2,14.7 L16.6,8.7 L28.7,12.1 L21.1,16.9Z M9.2,14.7 L9.2,25.5 L21.1,29.4 L28.4,23.6 M21.1,16.9 L21.1,29.4 M28.7,12.1 L28.4,23.6"/><path d="M16.6,8.7 L16.9,20.4 M9.2,25.5 L16.9,20.4 M28.4,23.6 L16.9,20.4" stroke-dasharray="1.5,1.5" stroke="#aaa"/></svg></div>
<div class="btn" style="left:1035px;top:337px;"><svg width="37" height="37" viewBox="0 0 37 37" fill="none" stroke="#c8c8c8" stroke-width="0.9" stroke-linejoin="round"><path d="M16.6,8.7 L28.7,12.1 L28.4,23.6 L16.9,20.4Z" fill="rgba(220,220,220,0.45)" stroke="none"/><path d="M9.2,14.7 L16.6,8.7 L28.7,12.1 L21.1,16.9Z M9.2,14.7 L9.2,25.5 L21.1,29.4 L28.4,23.6 M21.1,16.9 L21.1,29.4 M28.7,12.1 L28.4,23.6"/><path d="M16.6,8.7 L16.9,20.4 M9.2,25.5 L16.9,20.4 M28.4,23.6 L16.9,20.4" stroke-dasharray="1.5,1.5" stroke="#aaa"/></svg></div>
<div class="btn" style="left:1035px;top:380px;height:38px"><svg width="37" height="37" viewBox="0 0 37 37" fill="none" stroke="#c8c8c8" stroke-width="0.9" stroke-linejoin="round"><path d="M9.2,25.5 L21.1,29.4 L28.4,23.6 L16.9,20.4Z" fill="rgba(220,220,220,0.45)" stroke="none"/><path d="M9.2,14.7 L16.6,8.7 L28.7,12.1 L21.1,16.9Z M9.2,14.7 L9.2,25.5 L21.1,29.4 L28.4,23.6 M21.1,16.9 L21.1,29.4 M28.7,12.1 L28.4,23.6"/><path d="M16.6,8.7 L16.9,20.4 M9.2,25.5 L16.9,20.4 M28.4,23.6 L16.9,20.4" stroke-dasharray="1.5,1.5" stroke="#aaa"/></svg></div>
<div class="btn" style="left:1035px;top:424px;height:38px"><svg width="37" height="37" viewBox="0 0 37 37" fill="none" stroke="#c8c8c8" stroke-width="0.9" stroke-linejoin="round"><path d="M9.2,14.7 L16.6,8.7 L28.7,12.1 L21.1,16.9Z" fill="rgba(220,220,220,0.45)" stroke="none"/><path d="M9.2,14.7 L16.6,8.7 L28.7,12.1 L21.1,16.9Z M9.2,14.7 L9.2,25.5 L21.1,29.4 L28.4,23.6 M21.1,16.9 L21.1,29.4 M28.7,12.1 L28.4,23.6"/><path d="M16.6,8.7 L16.9,20.4 M9.2,25.5 L16.9,20.4 M28.4,23.6 L16.9,20.4" stroke-dasharray="1.5,1.5" stroke="#aaa"/></svg></div>

<!-- left color bar -->
<div style="position:absolute;left:77px;top:64px;width:13px;height:414px;background:linear-gradient(to bottom,#ff0000 0,#ff0000 60px,#afaf00 119px,#00c300 178px,#008c8c 237px,#0000ff 291px,#a800a8 345px,#a800a8 100%);"></div>
<div style="position:absolute;left:71px;top:111px;width:25px;height:25px;border-radius:4px;background:rgba(245,238,238,0.95);"></div>
<div style="position:absolute;left:77px;top:123px;width:13px;height:2px;background:#222;"></div>
<div style="position:absolute;left:71px;top:406px;width:25px;height:25px;border-radius:4px;background:rgba(245,236,245,0.95);"></div>
<div style="position:absolute;left:77px;top:418px;width:13px;height:1px;background:#222;"></div>
<div class="tick" style="top:63.5px"></div><div class="tl" style="top:55.2px">11</div>
<div class="tick" style="top:140.9px"></div><div class="tl" style="top:132.6px">5</div>
<div class="tick" style="top:218.3px"></div><div class="tl" style="top:210.0px">-1</div>
<div class="tick" style="top:295.7px"></div><div class="tl" style="top:287.4px">-7</div>
<div class="tick" style="top:373.1px"></div><div class="tl" style="top:364.8px">-13</div>
<div class="tick" style="top:450.5px"></div><div class="tl" style="top:442.2px">-19</div>

<!-- left value boxes -->
<div class="lab" style="top:513.5px;">最大值</div>
<div class="lab" style="top:556.5px;">最小值</div>
<div class="lab" style="top:600.5px;">位数</div>
<div class="box" style="top:504px;height:32px"></div>
<div class="box" style="top:548px;"></div>
<div class="box" style="top:592px;"></div>
<svg style="position:absolute;left:60px;top:500px" width="140" height="135" viewBox="60 500 140 135" fill="none" stroke="#ddd" stroke-width="1.2">
<path d="M88.5,516 L81.5,523 L88.5,530"/><path d="M166.5,516 L173.5,523 L166.5,530"/>
<path d="M88.5,559.5 L81.5,566.5 L88.5,573.5"/><path d="M166.5,559.5 L173.5,566.5 L166.5,573.5"/>
<path d="M161,607 L168,614 L175,607"/>
</svg>
<div style="position:absolute;left:97px;top:510px;width:60px;text-align:center;font-size:18.5px;line-height:20px;">6</div>
<div style="position:absolute;left:97px;top:553.5px;width:60px;text-align:center;font-size:18.5px;line-height:20px;">-16</div>
<div style="position:absolute;left:83px;top:599.5px;font-size:18.5px;line-height:20px;">0</div>
<!-- bottom bar -->
<div id="bar"></div>
<div style="position:absolute;left:14px;top:653px;width:37px;height:37px;background:#4064ff;"></div>
<div style="position:absolute;left:51px;top:653px;width:38px;height:37px;background:#999;"></div>
<div style="position:absolute;left:95px;top:653px;width:37px;height:37px;background:#4064ff;"></div>
<div style="position:absolute;left:132px;top:653px;width:38px;height:37px;background:#999;"></div>
<div style="position:absolute;left:174px;top:653px;width:35px;height:35px;border:1px solid #c8c8c8;"></div>
<div style="position:absolute;left:211px;top:653px;width:25px;height:37px;background:#999;"></div>
<svg style="position:absolute;left:0;top:640px" width="260" height="64" viewBox="0 640 260 64">
<g stroke="#fff" stroke-width="0.9" fill="rgba(255,255,255,0.28)" stroke-linejoin="round">
<path d="M32.8,661.9 L42,667.8 L32.8,672.2 L23.4,667.8Z"/>
<path d="M23.4,667.8 L32.8,672.2 L32.8,681.6 L26.8,678.6Z"/>
<path d="M42,667.8 L32.8,672.2 L32.8,681.6 L38.6,678.6Z"/>
</g>
<g fill="#fff"><circle cx="32.8" cy="661.9" r="1.3"/><circle cx="42" cy="667.8" r="1.3"/><circle cx="23.4" cy="667.8" r="1.3"/><circle cx="32.8" cy="672.2" r="1.3"/><circle cx="32.8" cy="681.6" r="1.3"/><circle cx="26.8" cy="678.6" r="1.3"/><circle cx="38.6" cy="678.6" r="1.3"/></g>
<g stroke="#e4e4e4" stroke-width="0.9" fill="rgba(255,255,255,0.22)" stroke-linejoin="round">
<path d="M70.1,661.7 L79.2,666.9 L70.1,672 L61.2,666.9Z"/>
<path d="M61.2,666.9 L70.1,672 L70.1,681.1 L61.2,676.1Z"/>
<path d="M79.2,666.9 L70.1,672 L70.1,681.1 L79.2,676.1Z"/>
</g>
<g fill="#f0f0f0"><circle cx="70.1" cy="661.7" r="1.3"/><circle cx="79.2" cy="666.9" r="1.3"/><circle cx="61.2" cy="666.9" r="1.3"/><circle cx="70.1" cy="672" r="1.3"/><circle cx="70.1" cy="681.1" r="1.3"/><circle cx="61.2" cy="676.1" r="1.3"/><circle cx="79.2" cy="676.1" r="1.3"/></g>
<g fill="#fff"><rect x="102.2" y="660.1" width="2" height="2"/><rect x="102.2" y="670.6" width="2" height="2"/><rect x="102.2" y="680.9" width="2" height="2"/><rect x="112.8" y="660.1" width="2" height="2"/><rect x="112.8" y="670.6" width="2" height="2"/><rect x="112.8" y="680.9" width="2" height="2"/><rect x="123.1" y="660.1" width="2" height="2"/><rect x="123.1" y="670.6" width="2" height="2"/><rect x="123.1" y="680.9" width="2" height="2"/></g>
<g stroke="#dcdcdc" stroke-width="0.8" fill="none">
<path d="M140.9,661.3 H161.7 V681.9 H140.9Z M140.9,671.6 H161.7 M151.3,661.3 V681.9 M140.9,681.9 L161.7,661.3 M140.9,671.6 L151.3,661.3 M151.3,681.9 L161.7,671.6"/>
</g>
<g fill="#fff"><rect x="139.7" y="660.1" width="2" height="2"/><rect x="139.7" y="670.4" width="2" height="2"/><rect x="139.7" y="680.7" width="2" height="2"/><rect x="150.1" y="660.1" width="2" height="2"/><rect x="150.1" y="670.4" width="2" height="2"/><rect x="150.1" y="680.7" width="2" height="2"/><rect x="160.5" y="660.1" width="2" height="2"/><rect x="160.5" y="670.4" width="2" height="2"/><rect x="160.5" y="680.7" width="2" height="2"/></g>
<path d="M190,672.2 L190,670.6 L191.4,669.4 L192.8,670.6 L192.8,672.2Z" fill="#fff"/>
<g stroke="#fff" stroke-width="1.8" fill="none"><path d="M216,666.3 L223.8,659 L231.6,666.3"/><path d="M216,677 L223.8,684.3 L231.6,677"/></g>
</svg>
<!-- bottom right -->
<div class="blab" style="left:821px;top:661.5px;">点坐标</div>
<div class="blab" style="left:943.5px;top:661.5px;">缩略图</div>
<div style="position:absolute;left:877.5px;top:659.5px;width:50.5px;height:21px;border:2px solid #9c9c9c;border-radius:13px;"></div>
<div style="position:absolute;left:884px;top:666px;width:12.5px;height:12.5px;border-radius:7px;background:#9c9c9c;"></div>
<div style="position:absolute;left:1000px;top:659.5px;width:50.5px;height:21px;border:2px solid #dcdcdc;border-radius:13px;"></div>
<div style="position:absolute;left:1006px;top:665.5px;width:13px;height:13px;border-radius:7px;background:#ececec;"></div>
<div class="ax" style="left:207.5px;top:242px;color:#ff0000;font-size:19.5px;letter-spacing:0">X (mm)</div>
<div class="ax" style="left:164.5px;top:262px;color:#fff">27.535</div>
<div class="ax" style="left:177px;top:311px;color:#fff">15.945</div>
<div class="ax" style="left:190px;top:371px;color:#fff">4.356</div>
<div class="ax" style="left:208px;top:444px;color:#fff">-7.234</div>
<div class="ax" style="left:229.5px;top:536px;color:#fff">-18.824</div>
<div class="ax" style="left:940px;top:337px;color:#008000;font-size:19.5px;letter-spacing:0">Y (mm)</div>
<div class="ax" style="left:935.5px;top:374px;color:#fff">38.214</div>
<div class="ax" style="left:859.5px;top:412px;color:#fff">22.929</div>
<div class="ax" style="left:769px;top:458px;color:#fff">7.645</div>
<div class="ax" style="left:659px;top:514px;color:#fff">-7.640</div>
<div class="ax" style="left:522.5px;top:584px;color:#fff">-22.925</div>

</body></html>
